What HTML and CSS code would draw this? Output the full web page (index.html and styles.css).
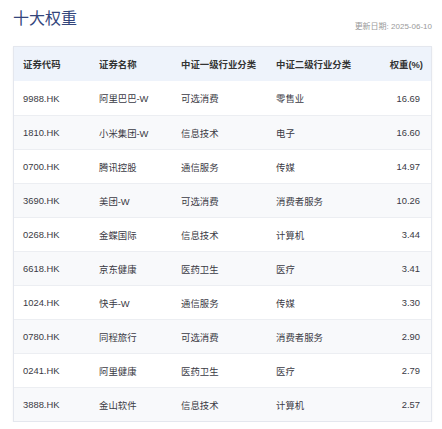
FILE: index.html
```html
<!DOCTYPE html>
<html>
<head>
<meta charset="utf-8">
<link rel="stylesheet" href="styles.css">
</head>
<body>
<div class="page">
  <div class="head">
    <h1 class="title">十大权重</h1>
    <span class="date">更新日期: 2025-06-10</span>
  </div>
  <div class="card">
    <div class="row hdr">
      <span>证券代码</span><span>证券名称</span><span>中证一级行业分类</span><span>中证二级行业分类</span><span class="num">权重(%)</span>
    </div>
    <div class="row"><span>9988.HK</span><span>阿里巴巴-W</span><span>可选消费</span><span>零售业</span><span class="num">16.69</span></div>
    <div class="row"><span>1810.HK</span><span>小米集团-W</span><span>信息技术</span><span>电子</span><span class="num">16.60</span></div>
    <div class="row"><span>0700.HK</span><span>腾讯控股</span><span>通信服务</span><span>传媒</span><span class="num">14.97</span></div>
    <div class="row"><span>3690.HK</span><span>美团-W</span><span>可选消费</span><span>消费者服务</span><span class="num">10.26</span></div>
    <div class="row"><span>0268.HK</span><span>金蝶国际</span><span>信息技术</span><span>计算机</span><span class="num">3.44</span></div>
    <div class="row"><span>6618.HK</span><span>京东健康</span><span>医药卫生</span><span>医疗</span><span class="num">3.41</span></div>
    <div class="row"><span>1024.HK</span><span>快手-W</span><span>通信服务</span><span>传媒</span><span class="num">3.30</span></div>
    <div class="row"><span>0780.HK</span><span>同程旅行</span><span>可选消费</span><span>消费者服务</span><span class="num">2.90</span></div>
    <div class="row"><span>0241.HK</span><span>阿里健康</span><span>医药卫生</span><span>医疗</span><span class="num">2.79</span></div>
    <div class="row"><span>3888.HK</span><span>金山软件</span><span>信息技术</span><span>计算机</span><span class="num">2.57</span></div>
  </div>
</div>
</body>
</html>
```
FILE: styles.css
```css
* { box-sizing: border-box; }
html, body { margin: 0; padding: 0; background: #fff; }
body { font-family: "Liberation Sans", Arial, "Noto Sans CJK SC", sans-serif; color: #333; }
.page { padding: 8px 10px 0 13px; width: 442px; }
.head { display: flex; justify-content: space-between; align-items: flex-end; height: 31px; }
.title { margin: 0; font-size: 16px; font-weight: normal; color: #34467c; line-height: 22px; align-self: flex-start; }
.date { font-size: 8px; color: #9a9a9a; margin-bottom: 8px; margin-right: 0; }
.card { margin-top: 7px; width: 419px; border: 1px solid #e4e7ee; box-shadow: 0 1px 2px rgba(0,0,0,0.06); }
.row { display: grid; grid-template-columns: 76px 82px 95px 1fr 60px; align-items: center; height: 34px; padding: 0 11px 0 9px; font-size: 9.4px; color: #3a3a44; border-top: 1px solid #eceef2; }
.row:nth-child(odd) { background: #f8f9fb; }
.row.hdr { background: #eef3fb; height: 34px; border-top: none; font-weight: bold; color: #333; }
.row:nth-child(2) { border-top: none; }
.num { text-align: right; }
.row.hdr .num { margin-right: -3px; }
```
